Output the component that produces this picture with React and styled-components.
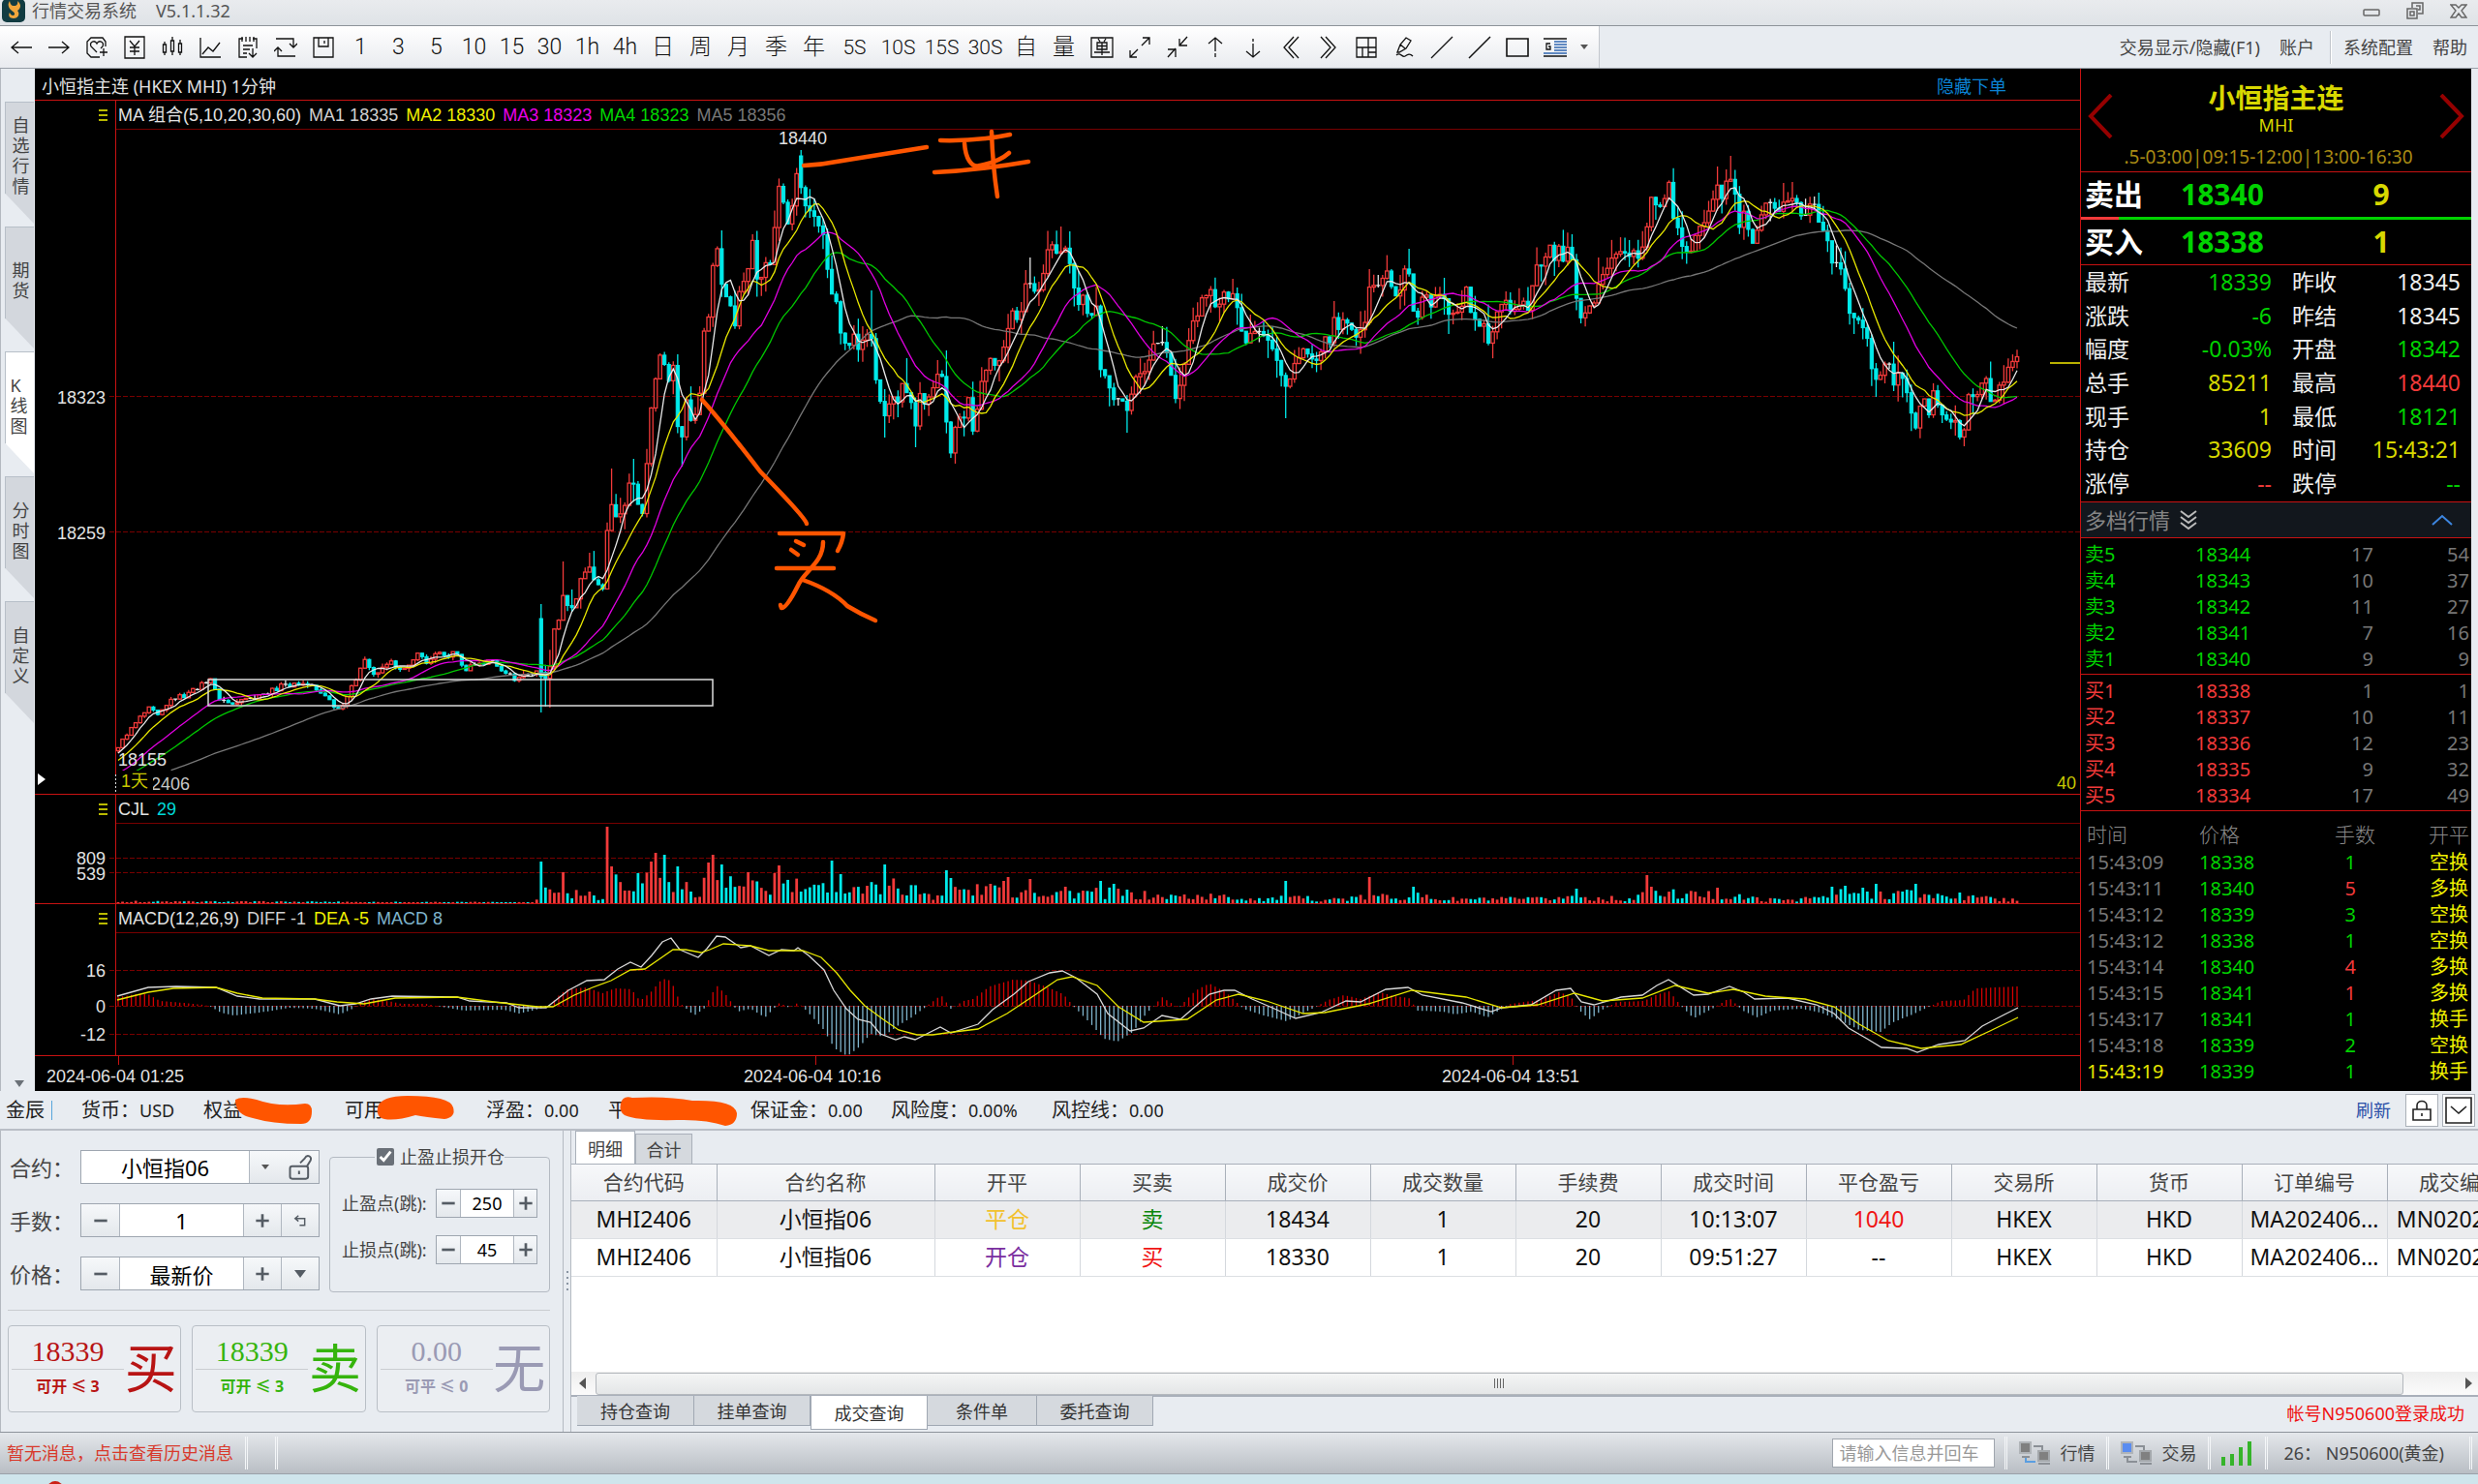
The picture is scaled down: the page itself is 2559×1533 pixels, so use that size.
import React from 'react';
import styled, { createGlobalStyle } from 'styled-components';

const GlobalStyle = createGlobalStyle`
  * {
    box-sizing: border-box;
  }

  body {
    margin: 0;
    background: #cfe5ec;
    font-family: "Noto Sans", "Noto Sans CJK SC", sans-serif;
    font-size: 18px;
    line-height: 24px;
    color: #333;
  }

  button, input, select {
    font-family: inherit;
    margin: 0;
    padding: 0;
  }

  a {
    color: inherit;
    text-decoration: none;
  }
`;

const RED = '#c81212';
const DIM_RED = '#780000';
const GREEN = '#00d200';
const YELLOW = '#d8d800';
const UP = '#f23a3a';
const ORANGE = '#ff5500';

/* ---------- window frame ---------- */

const Window = styled.div`
  display: flex;
  flex-direction: column;
  min-height: 100vh;
  overflow: hidden;
  background: #e8ecf1;
`;

const TitleBar = styled.header`
  display: flex;
  align-items: center;
  height: 27px;
  padding: 0 11px 4px 2px;
  background: linear-gradient(#e9ebee, #dfe3e7);
  border-bottom: 1px solid #8d9399;
  line-height: 22px;
  color: #555;
`;

const AppName = styled.span`
  margin: 0 20px 0 7px;
`;

const WindowButtons = styled.div`
  display: flex;
  gap: 26px;
  margin-left: auto;
`;

const PlainButton = styled.button`
  display: flex;
  align-items: center;
  justify-content: center;
  border: none;
  background: none;
  color: inherit;
`;

const ToolRow = styled.div`
  display: flex;
  height: 44px;
  border-bottom: 1px solid #9aa0a8;
`;

const Toolbar = styled.div`
  display: flex;
  align-items: center;
  padding: 0 4px 0 2px;
  background: linear-gradient(#fff, #e9ebef);
  border-right: 1px solid #c3c7cd;
`;

const ToolButton = styled(PlainButton)`
  width: ${({ $wide }) => ($wide ? 45 : 39)}px;
  height: 40px;
  font-family: Roboto, "Noto Sans CJK SC", sans-serif;
  font-weight: 300;
  font-size: ${({ $wide }) => ($wide ? 21 : 23)}px;
  line-height: 40px;
  color: #111;
`;

const Menu = styled.nav`
  display: flex;
  align-items: center;
  gap: 20px;
  margin-left: auto;
  padding: 0 11px 0 0;
  color: #444;
`;

const MenuDivider = styled.span`
  width: 2px;
  height: 34px;
  margin: 0 -8px 0 -4px;
  background: #fff;
  border-left: 1px solid #c0c4ca;
`;

const Main = styled.main`
  display: grid;
  grid-template-columns: 36px 1fr 404px;
  padding-right: 7px;
`;

/* ---------- side tabs ---------- */

const SideTabs = styled.nav`
  display: flex;
  flex-direction: column;
  gap: 3px;
  padding: 34px 1px 4px 4px;
  border-left: 1px solid #b4b9c0;
`;

const SideTab = styled.button`
  display: flex;
  align-items: center;
  justify-content: center;
  height: 126px;
  padding: 0 ${({ $active }) => ($active ? 10 : 6)}px 15px 8px;
  border: none;
  border-top: 1px solid #b7bfc8;
  border-left: 1px solid #b7bfc8;
  clip-path: polygon(0 0, 100% 0, 100% 100%, 0 75%);
  background: ${({ $active }) => ($active ? '#fff' : '#d3d7dd')};
  font-size: 18px;
  line-height: 21px;
  text-align: left;
  color: #444;
`;

const SideArrow = styled.span`
  margin: auto auto 0;
  border: 5px solid transparent;
  border-top: 7px solid #6b7178;
  border-bottom: none;
`;

/* ---------- chart ---------- */

const ChartArea = styled.section`
  background: #000;
  font-family: "Liberation Sans", "Noto Sans CJK SC", sans-serif;
  color: #e2e2e2;

  svg {
    display: block;
    width: 100%;
    height: auto;
    overflow: visible;
    position: relative;
  }
`;

const ChartTitle = styled.div`
  display: flex;
  justify-content: space-between;
  height: 32px;
  padding: 6px 76px 0 7px;
  font-family: "Noto Sans", "Noto Sans CJK SC", sans-serif;
`;

const HideLink = styled.a`
  color: #0b82d4;
`;

const PaneHeader = styled.div`
  display: grid;
  grid-template-columns: 84px 1fr;
  height: 31px;
  border-top: 1px solid ${RED};
`;

const PaneGrip = styled.span`
  display: flex;
  align-items: center;
  justify-content: flex-end;
  padding-right: 8px;
  border-right: 1px solid ${RED};

  i {
    width: 9px;
    height: 12px;
    border-top: 2px solid #b9b900;
    border-bottom: 2px solid #b9b900;
    background: linear-gradient(#b9b900, #b9b900) 0 3px / 9px 2px no-repeat;
  }
`;

const PaneLegend = styled.div`
  display: flex;
  gap: 8px;
  align-items: center;
  padding-left: 2px;
  border-bottom: 1px solid ${DIM_RED};
`;

const Legend = styled.span`
  color: ${({ $color }) => $color};
`;

/* ---------- quote panel ---------- */

const QuotePanel = styled.aside`
  display: flex;
  flex-direction: column;
  background: #000;
  border-left: 1px solid ${RED};
  color: #eee;
`;

const QuoteHead = styled.div`
  display: grid;
  grid-template-columns: 40px 1fr 40px;
  height: 107px;
  padding-top: 14px;
  border-bottom: 1px solid ${RED};
  text-align: center;
  color: ${YELLOW};

  svg {
    display: block;
    margin: 12px auto 0;
  }
`;

const QuoteName = styled.h1`
  margin: 0;
  font-size: 28px;
  font-weight: 600;
  line-height: 32px;
`;

const QuoteCode = styled.div`
  line-height: 24px;
`;

const Session = styled.div`
  margin-top: 9px;
  padding-right: 16px;
  font-size: 19px;
  line-height: 24px;
  color: #a88a14;
`;

const BestRow = styled.div`
  display: grid;
  grid-template-columns: 99px 187px 40px 1fr;
  align-items: center;
  height: 46px;
  padding-left: 4px;
  font-size: 30px;
  font-weight: 700;
  line-height: 40px;
  color: #fff;
`;

const Balance = styled.div`
  height: 3px;
  background: linear-gradient(90deg, ${UP} 39px, ${GREEN} 39px);
`;

const Tint = styled.span`
  color: ${({ $color }) => $color};
  text-align: ${({ $align }) => $align || 'left'};
`;

const Stats = styled.dl`
  flex: 1;
  display: grid;
  grid-template-columns: 75px 118px 75px 1fr;
  grid-auto-rows: 1fr;
  align-items: center;
  margin: 0;
  padding: 0 11px 2px 4px;
  border-top: 1px solid ${RED};
  border-bottom: 1px solid ${RED};
  font-size: 23px;
  line-height: 28px;

  dt {
    white-space: nowrap;
  }

  dt:nth-of-type(even) {
    padding-left: 21px;
  }

  dd {
    margin: 0;
    text-align: right;
    white-space: nowrap;
  }
`;

const DepthHead = styled.div`
  display: flex;
  align-items: center;
  gap: 10px;
  height: 37px;
  padding: 0 19px 0 4px;
  background: #12171d;
  border-bottom: 1px solid ${RED};
  font-size: 22px;
  color: #858585;

  svg:last-child {
    margin-left: auto;
  }
`;

const DepthBlock = styled.div`
  padding: 3px 0 2px;
  border-bottom: 1px solid ${RED};
`;

const DepthTable = styled.table`
  width: 100%;
  table-layout: fixed;
  border-collapse: collapse;
  font-size: 20px;
  line-height: 27px;
  color: ${({ $color }) => $color};

  td {
    height: 27px;
    padding: 0 2px 0 4px;
  }

  td:nth-child(1) { width: 114px; }
  td:nth-child(2) { width: 100px; }
  td:nth-child(3) { width: 90px; }

  td:nth-child(n + 3) {
    color: #777;
    text-align: right;
  }
`;

const TapeTable = styled.table`
  width: 100%;
  margin: 9px 0 7px;
  table-layout: fixed;
  border-collapse: collapse;
  font-size: 20px;
  line-height: 27px;
  color: ${GREEN};

  th {
    height: 30px;
    padding: 0 2px 0 6px;
    font-size: 21px;
    font-weight: 300;
    text-align: left;
    color: #888;
  }

  td {
    height: 27px;
    padding: 0 3px 0 6px;
  }

  th:nth-child(1) { width: 116px; }
  th:nth-child(2) { width: 100px; }
  th:nth-child(3) { width: 90px; }

  th:nth-child(n + 3) {
    text-align: right;
  }

  td:nth-child(1) {
    color: #777;
  }

  tr:last-child td:nth-child(1) {
    color: #e8e800;
  }

  td:nth-child(3) {
    padding-right: 22px;
    text-align: right;
  }

  td:nth-child(4) {
    text-align: right;
    color: #f0f000;
  }
`;

/* ---------- account bar ---------- */

const AccountBar = styled.div`
  display: flex;
  align-items: center;
  gap: 30px;
  height: 41px;
  padding: 0 3px 0 6px;
  border-bottom: 2px solid #b9bec6;
  color: #222;
`;

const AccountItem = styled.span`
  display: flex;
  align-items: center;
  width: ${({ $width }) => ($width ? `${$width}px` : 'auto')};
  white-space: nowrap;

  svg {
    flex: none;
    margin-left: -9px;
  }
`;

const AccountLabel = styled.span`
  font-size: 20px;
`;

const AccountMark = styled.span`
  width: 2px;
  height: 20px;
  margin-left: 7px;
  background: #58a6dc;
`;

const AccountTools = styled.div`
  display: flex;
  align-items: center;
  gap: 4px;
  margin-left: auto;

  a {
    margin-right: 11px;
    color: #2b50a8;
  }
`;

const SquareButton = styled(PlainButton)`
  width: 34px;
  height: 34px;
  background: #fff;
  border: 1px solid #aab0b8;
`;

/* ---------- order form ---------- */

const Lower = styled.div`
  display: grid;
  grid-template-columns: 581px 9px minmax(0, 1fr);
  height: 311px;
`;

const OrderForm = styled.form`
  display: flex;
  flex-direction: column;
  padding: 20px 13px 0 7px;
  border-left: 1px solid #b4b9c0;
  color: #444;
`;

const FormTop = styled.div`
  display: grid;
  grid-template-columns: 322px 228px;
  gap: 10px;
`;

const FormRow = styled.div`
  display: flex;
  align-items: center;
  height: 35px;
  margin-bottom: 20px;
  font-size: 22px;

  label {
    width: 75px;
    padding-left: 2px;
    white-space: nowrap;
  }
`;

const Stepper = styled.div`
  display: flex;
  width: ${({ $small }) => ($small ? 105 : 247)}px;
  height: ${({ $small }) => ($small ? 30 : 35)}px;
  border: 1px solid #9ea6b0;
  background: #fff;

  input, select {
    flex: 1;
    min-width: 0;
    border: none;
    outline: none;
    appearance: none;
    background: #fff;
    text-align: center;
    text-align-last: center;
    font-size: ${({ $small }) => ($small ? 18 : 22)}px;
    color: #000;
  }
`;

const StepButton = styled(PlainButton)`
  width: ${({ $width }) => $width || 39}px;
  background: linear-gradient(#f6f8fa, #e4e8ec);
  color: #555c64;

  & + input, & + &, input + &, select + & {
    border-left: 1px solid #b0b7c0;
  }
`;

const StopBox = styled.fieldset`
  min-width: 0;
  height: 152px;
  margin: -5px 0 0;
  padding: 21px 12px 0;
  border: 1px solid #b4bac2;
  border-radius: 4px;

  legend {
    display: flex;
    align-items: center;
    gap: 6px;
    margin: 0 auto;
    padding: 0 0 0 2px;
  }

  input[type='checkbox'] {
    width: 18px;
    height: 18px;
    accent-color: #6a7078;
  }
`;

const StopRow = styled.div`
  display: flex;
  align-items: center;
  justify-content: space-between;
  margin-bottom: 18px;
  white-space: nowrap;
`;

const Rule = styled.hr`
  width: 100%;
  margin: 0;
  border: none;
  border-top: 1px solid #c9ccd0;
`;

const TradeButtons = styled.div`
  display: flex;
  gap: 11px;
  margin-top: 15px;
`;

const TradeButton = styled.button`
  flex: 1;
  display: grid;
  grid-template-columns: 116px 1fr;
  align-items: center;
  height: 90px;
  padding: 0 3px 2px;
  border: 1px solid #b9bfc6;
  border-radius: 4px;
  background: #ebeef2;
  color: ${({ $color }) => $color};
`;

const TradeSide = styled.span`
  font-size: 54px;
  font-weight: 400;
  line-height: 60px;
`;

const TradePrice = styled.span`
  display: block;
  font-family: "Liberation Serif", serif;
  font-size: 30px;
  line-height: 36px;
`;

const TradeLimit = styled.span`
  display: block;
  border-top: 1px solid #c9ccd0;
  font-size: 16px;
  font-weight: 700;
  line-height: 34px;
`;

const Splitter = styled.div`
  display: flex;
  align-items: center;
  justify-content: center;
  border-left: 1px solid #b4bac2;
  border-right: 1px solid #b4bac2;

  i {
    width: 2px;
    height: 22px;
    background: repeating-linear-gradient(#8a95a3 0 2px, transparent 2px 6px);
  }
`;

/* ---------- deals ---------- */

const Deals = styled.section`
  display: flex;
  flex-direction: column;
  overflow: hidden;
  background: #fff;
`;

const TopTabs = styled.div`
  display: flex;
  align-items: flex-end;
  height: 35px;
  padding-left: 4px;
  background: #e8ecf1;
  border-bottom: 1px solid #a9b0ba;
`;

const TopTab = styled.button`
  width: ${({ $active }) => ($active ? 62 : 59)}px;
  height: ${({ $active }) => ($active ? 34 : 31)}px;
  border: 1px solid #a9b0ba;
  border-bottom: none;
  background: ${({ $active }) => ($active ? '#fff' : '#d5d9de')};
  font-size: 18px;
  color: #444;
`;

const DealTable = styled.table`
  width: 2025px;
  table-layout: fixed;
  border-collapse: collapse;
  text-align: center;
  color: #111;

  th {
    width: 150px;
    height: 37px;
    padding: 0;
    border-right: 1px solid #a9b0ba;
    border-bottom: 1px solid #a9b0ba;
    background: linear-gradient(#f7f8fa, #eceef2);
    font-size: 21px;
    font-weight: 400;
    color: #444;
  }

  th:nth-child(2) {
    width: 225px;
  }

  td {
    height: 39px;
    padding: 0 0 2px;
    border-right: 1px solid #d4d8dd;
    border-bottom: 1px solid #dcdfe3;
    font-size: 23px;
    line-height: 30px;
    white-space: nowrap;
  }

  tbody tr:first-child {
    background: #ebecee;
  }
`;

const ScrollTrack = styled.div`
  display: flex;
  align-items: center;
  justify-content: space-between;
  height: 24px;
  margin-top: auto;
  padding: 0 6px 0 8px;
  background: linear-gradient(#eee, #fbfbfb);
`;

const ScrollThumb = styled.div`
  flex: 1;
  display: flex;
  align-items: center;
  justify-content: center;
  height: 23px;
  margin: 0 64px 0 10px;
  border: 1px solid #b4b8bd;
  border-radius: 3px;
  background: linear-gradient(#f4f5f5, #e4e6e7);

  i {
    width: 11px;
    height: 10px;
    background: repeating-linear-gradient(90deg, #666 0 1px, transparent 1px 3px);
  }
`;

const ScrollArrow = styled.button`
  width: 0;
  height: 0;
  border: 6px solid transparent;
  ${({ $left }) => ($left
    ? 'border-right: 7px solid #555; border-left: none;'
    : 'border-left: 7px solid #555; border-right: none;')}
  background: none;
`;

const BottomTabs = styled.div`
  display: flex;
  align-items: flex-start;
  height: 38px;
  padding: 0 14px 0 6px;
  background: #e8ecf1;
  border-top: 2px solid #a9b0ba;
`;

const BottomTab = styled.button`
  width: ${({ $width }) => $width}px;
  height: ${({ $active }) => ($active ? 35 : 31)}px;
  margin-top: -1px;
  border: 1px solid #a0a8b3;
  border-top: none;
  border-left-width: ${({ $active }) => ($active ? 1 : 0)}px;
  background: ${({ $active }) => ($active ? '#fff' : '#d5d9de')};
  font-size: 18px;
  color: #333;
`;

const LoginNotice = styled.span`
  margin: 5px 0 0 auto;
  color: #f01010;
`;

/* ---------- status bar ---------- */

const StatusBar = styled.footer`
  display: flex;
  align-items: center;
  height: 44px;
  padding: 0 5px 0 7px;
  border-top: 1px solid #8d939b;
  border-bottom: 1px solid #9aa1a9;
  background: linear-gradient(#e4e7eb, #b9bec4);
  color: #444;

  input {
    width: 168px;
    height: 30px;
    margin: 0 10px 0 auto;
    padding: 0 6px;
    border: 1px solid #a0a6ae;
    background: #fff;
    font-size: 18px;
  }

  input::placeholder {
    color: #999;
  }
`;

const StatusLink = styled.a`
  margin-right: 12px;
  color: #d8392b;
`;

const StatusDivider = styled.span`
  width: 3px;
  height: 34px;
  margin-right: ${({ $gap }) => $gap || 12}px;
  border-left: 1px solid #f4f6f8;
  border-right: 1px solid #f4f6f8;
`;

const StatusItem = styled.span`
  display: flex;
  align-items: center;
  gap: 9px;
  margin-right: ${({ $last }) => ($last ? 26 : 12)}px;
  white-space: pre;
`;

const Taskbar = styled.div`
  flex: 1;
  height: 10px;
  padding-left: 49px;
  overflow: hidden;
  background: #cfe5ec;

  i {
    display: block;
    width: 16px;
    height: 16px;
    margin-top: 7px;
    border-radius: 8px;
    background: #cc1f14;
  }
`;

/* ---------- chart data ---------- */

// closing trace of the session, as [x, y] on the price pane
const closes = [
  [121, 772], [127, 765], [134, 753], [154, 728], [163, 736], [181, 720], [192, 719], [208, 707], [217, 702],
  [228, 724], [241, 727], [268, 720], [292, 708], [321, 707], [337, 720], [349, 735], [357, 726], [364, 707],
  [377, 683], [386, 697], [402, 683], [415, 692], [433, 675], [442, 685], [449, 673], [460, 680], [471, 672],
  [480, 692], [493, 683], [511, 685], [531, 702], [554, 692], [558, 699], [567, 695], [573, 649], [583, 615],
  [591, 634], [600, 598], [609, 588], [623, 612], [629, 525], [638, 530], [643, 540], [648, 499], [656, 500],
  [662, 550], [670, 450], [679, 370], [686, 377], [690, 402], [694, 363], [700, 438], [704, 450], [709, 413],
  [713, 431], [718, 422], [724, 402], [726, 352], [732, 322], [736, 270], [740, 253], [746, 302], [752, 315],
  [759, 336], [762, 299], [770, 291], [778, 249], [784, 304], [791, 270], [797, 275], [801, 224], [805, 190],
  [810, 216], [815, 240], [820, 206], [824, 163], [829, 215], [838, 215], [847, 245], [853, 250], [857, 316],
  [862, 295], [867, 341], [871, 356], [876, 366], [881, 349], [887, 359], [893, 350], [899, 332], [902, 386],
  [907, 404], [912, 429], [919, 418], [926, 413], [934, 393], [941, 416], [946, 449], [950, 413], [958, 416],
  [967, 386], [974, 391], [978, 447], [982, 463], [989, 429], [996, 431], [1001, 402], [1005, 443], [1013, 395],
  [1025, 370], [1030, 379], [1039, 349], [1043, 325], [1056, 324], [1060, 286], [1072, 299], [1084, 254],
  [1091, 266], [1097, 254], [1103, 268], [1113, 315], [1118, 307], [1125, 325], [1132, 313], [1136, 386],
  [1142, 395], [1151, 409], [1158, 416], [1164, 429], [1172, 384], [1180, 390], [1190, 363], [1197, 354],
  [1204, 358], [1209, 386], [1215, 413], [1221, 386], [1228, 349], [1237, 320], [1247, 299], [1257, 316],
  [1266, 299], [1276, 313], [1280, 338], [1288, 356], [1295, 343], [1307, 352], [1314, 363], [1321, 377],
  [1326, 399], [1335, 386], [1346, 358], [1357, 372], [1367, 352], [1372, 358], [1376, 324], [1383, 336],
  [1393, 327], [1402, 359], [1410, 325], [1414, 302], [1423, 292], [1433, 283], [1444, 310], [1452, 267],
  [1456, 292], [1461, 338], [1469, 307], [1479, 313], [1490, 297], [1497, 328], [1508, 325], [1514, 300],
  [1521, 333], [1532, 338], [1536, 357], [1544, 333], [1551, 307], [1558, 320], [1570, 308], [1579, 315],
  [1587, 280], [1591, 283], [1601, 253], [1606, 268], [1611, 248], [1615, 273], [1620, 257], [1625, 267],
  [1629, 318], [1637, 327], [1646, 310], [1654, 280], [1670, 265], [1682, 268], [1693, 260], [1699, 252],
  [1703, 202], [1711, 215], [1718, 218], [1722, 178], [1726, 210], [1735, 250], [1745, 263], [1755, 230],
  [1766, 220], [1772, 187], [1777, 203], [1782, 185], [1788, 178], [1792, 197], [1796, 235], [1802, 213],
  [1809, 250], [1819, 217], [1823, 208], [1835, 220], [1845, 207], [1852, 202], [1862, 228], [1867, 215],
  [1874, 217], [1880, 232], [1888, 257], [1895, 272], [1902, 283], [1908, 317], [1914, 333], [1922, 323],
  [1931, 370], [1936, 388], [1943, 390], [1950, 368], [1955, 392], [1962, 390], [1972, 410], [1977, 443],
  [1986, 410], [1991, 427], [1996, 407], [2005, 433], [2015, 440], [2018, 430], [2023, 445], [2029, 448],
  [2033, 407], [2044, 403], [2051, 397], [2058, 415], [2065, 395], [2070, 397], [2075, 375], [2083, 375],
];

// single bars that stand out: [x, fields]
const extremes = [
  [558, { open: 639, close: 699, high: 624, low: 736 }],
  [563, { low: 730 }],
  [568, { low: 731 }],
  [583, { high: 580 }],
  [607, { high: 571 }],
  [633, { high: 484 }],
  [653, { high: 474 }],
  [704, { low: 482 }],
  [745, { high: 238 }],
  [778, { high: 242 }],
  [829, { open: 161, high: 155 }],
  [899, { high: 300 }],
  [912, { low: 452 }],
  [935, { high: 370 }],
  [946, { low: 462 }],
  [978, { high: 362 }],
  [982, { low: 473 }],
  [1066, { high: 266 }],
  [1097, { high: 234 }],
  [1164, { low: 447 }],
  [1201, { high: 337 }],
  [1326, { low: 432 }],
  [1376, { high: 311 }],
  [1414, { high: 278 }],
  [1456, { high: 257 }],
  [1498, { low: 345 }],
  [1624, { high: 242 }],
  [1652, { high: 266 }],
  [1684, { high: 248 }],
  [1772, { high: 172 }],
  [1788, { high: 161 }],
  [1852, { high: 188 }],
  [1874, { high: 203 }],
  [1938, { low: 410 }],
  [1954, { high: 353 }],
  [2029, { low: 461 }],
];

const volumeEnvelope = [
  [121, 2], [550, 1], [556, 4], [558, 20], [620, 10], [628, 12], [634, 32], [660, 30], [690, 34], [715, 14],
  [735, 34], [760, 20], [800, 18], [812, 24], [840, 15], [870, 26], [895, 16], [912, 24], [940, 18],
  [965, 10], [985, 16], [1040, 16], [1100, 14], [1160, 12], [1200, 8], [1240, 9], [1290, 6], [1340, 6],
  [1380, 5], [1455, 10], [1490, 5], [1590, 5], [1620, 8], [1680, 5], [1710, 12], [1770, 10], [1830, 4],
  [1880, 7], [1900, 13], [1960, 13], [2000, 9], [2040, 7], [2083, 4],
];

const volumeSpikes = [
  [558, 43], [582, 32], [629, 79], [633, 38], [671, 43], [679, 52], [684, 50], [698, 38], [730, 42], [735, 50],
  [744, 40], [773, 32], [801, 31], [805, 39], [857, 44], [870, 30], [912, 40], [977, 34], [982, 26],
  [1022, 20], [1038, 23], [1042, 27], [1065, 25], [1098, 17], [1135, 23], [1149, 20], [1162, 14], [1326, 23],
  [1414, 27], [1461, 17], [1628, 15], [1702, 29], [1707, 17], [1772, 16], [1893, 17], [1907, 18], [1936, 20],
  [1977, 20], [2023, 11],
];

const diff = [
  [121, 1029], [153, 1020], [182, 1019], [223, 1020], [245, 1029], [268, 1032], [325, 1032], [351, 1039],
  [367, 1037], [383, 1032], [405, 1029], [472, 1030], [485, 1034], [523, 1036], [536, 1041], [564, 1041],
  [587, 1023], [606, 1013], [624, 1012], [638, 1001], [651, 994], [662, 999], [673, 987], [684, 973],
  [693, 969], [702, 981], [721, 989], [730, 980], [740, 967], [749, 968], [765, 979], [775, 977], [794, 987],
  [807, 981], [820, 982], [824, 979], [835, 987], [851, 1002], [861, 1023], [874, 1042], [886, 1053],
  [899, 1056], [909, 1068], [925, 1074], [934, 1071], [945, 1074], [957, 1068], [971, 1061], [982, 1067],
  [1010, 1058], [1025, 1043], [1047, 1027], [1062, 1014], [1084, 1005], [1097, 1003], [1111, 1010],
  [1133, 1027], [1144, 1047], [1167, 1065], [1181, 1062], [1200, 1049], [1219, 1053], [1234, 1040],
  [1249, 1027], [1264, 1023], [1275, 1023], [1293, 1032], [1316, 1042], [1338, 1052], [1364, 1046],
  [1390, 1034], [1405, 1035], [1431, 1022], [1454, 1020], [1469, 1028], [1510, 1036], [1540, 1045],
  [1551, 1041], [1581, 1038], [1607, 1023], [1622, 1021], [1633, 1035], [1646, 1038], [1674, 1030],
  [1696, 1028], [1711, 1018], [1723, 1012], [1749, 1028], [1764, 1027], [1786, 1019], [1801, 1025],
  [1812, 1032], [1846, 1031], [1876, 1038], [1894, 1047], [1909, 1062], [1928, 1073], [1943, 1082],
  [1969, 1083], [1980, 1087], [2002, 1079], [2029, 1075], [2047, 1060], [2070, 1048], [2084, 1041],
];

const dea = [
  [121, 1033], [153, 1025], [179, 1021], [223, 1020], [245, 1026], [271, 1031], [325, 1032], [348, 1035],
  [376, 1037], [408, 1031], [472, 1030], [510, 1035], [555, 1040], [571, 1040], [593, 1028], [612, 1020],
  [631, 1013], [651, 1002], [666, 1001], [682, 990], [695, 981], [708, 981], [724, 984], [733, 981],
  [747, 975], [775, 977], [794, 982], [829, 982], [848, 989], [864, 1005], [878, 1023], [893, 1039],
  [912, 1053], [928, 1064], [947, 1069], [963, 1069], [985, 1066], [1010, 1063], [1040, 1047], [1070, 1027],
  [1092, 1012], [1107, 1009], [1133, 1018], [1155, 1040], [1181, 1056], [1226, 1053], [1256, 1033],
  [1279, 1027], [1308, 1034], [1346, 1047], [1368, 1046], [1413, 1037], [1458, 1023], [1514, 1030],
  [1551, 1041], [1588, 1038], [1626, 1026], [1655, 1034], [1696, 1031], [1730, 1018], [1764, 1026],
  [1790, 1022], [1823, 1029], [1864, 1032], [1894, 1040], [1920, 1058], [1950, 1075], [1984, 1083],
  [2025, 1079], [2055, 1065], [2084, 1051],
];

// macd bars, signed height around the zero line
const macd = [
  [121, 9], [140, 12], [153, 12], [165, 5], [190, 3], [210, 1], [218, -1], [228, -7], [242, -10], [268, -7],
  [300, -2], [325, -3], [351, -9], [364, -3], [372, 3], [385, 7], [405, 4], [415, 2], [440, 2], [455, -1],
  [480, -5], [520, -4], [536, -8], [558, -3], [568, -1], [574, 8], [585, 17], [606, 19], [622, 13], [635, 18],
  [652, 17], [661, 5], [672, 14], [684, 28], [693, 26], [703, 2], [717, -10], [727, -3], [740, 21], [750, 11],
  [762, -6], [775, -3], [790, -12], [805, 3], [815, -2], [824, 3], [833, -5], [850, -24], [862, -44],
  [875, -52], [888, -42], [899, -29], [912, -32], [928, -20], [940, -13], [955, -2], [972, 11], [982, -3],
  [995, 5], [1005, 7], [1022, 20], [1046, 27], [1062, 26], [1080, 20], [1098, 12], [1110, -2], [1125, -17],
  [1140, -34], [1154, -37], [1170, -27], [1183, -9], [1200, 9], [1217, -2], [1235, 16], [1249, 23],
  [1266, 14], [1284, -3], [1305, -10], [1329, -16], [1355, -3], [1372, 6], [1388, 11], [1405, 7], [1425, 14],
  [1440, 10], [1455, 8], [1464, -5], [1490, -6], [1503, -9], [1520, -6], [1536, -12], [1560, 2], [1590, 6],
  [1610, 14], [1622, 10], [1630, -4], [1642, -14], [1655, -4], [1670, 4], [1698, 5], [1712, 12], [1724, 15],
  [1735, 1], [1749, -13], [1770, -2], [1786, 8], [1800, -5], [1815, -12], [1830, -5], [1860, -3], [1880, -7],
  [1900, -15], [1920, -25], [1942, -27], [1955, -17], [1975, -9], [1990, -2], [2005, 5], [2028, 6],
  [2040, 18], [2060, 19], [2084, 20],
];

const BARS = 432;
const FIRST_X = 122;
const STEP = (2083 - FIRST_X) / (BARS - 1);
const ZERO_Y = 1039;

const noise = (n) => {
  const v = Math.sin(n * 127.1 + 311.7) * 43758.5453;
  return v - Math.floor(v);
};

const sample = (points, x) => {
  if (x <= points[0][0]) return points[0][1];
  for (let i = 1; i < points.length; i += 1) {
    if (x <= points[i][0]) {
      const [x0, y0] = points[i - 1];
      const [x1, y1] = points[i];
      return y0 + ((y1 - y0) * (x - x0)) / (x1 - x0);
    }
  }
  return points[points.length - 1][1];
};

const indexAt = (x) => Math.round((x - FIRST_X) / STEP);

const bars = [];
for (let i = 0; i < BARS; i += 1) {
  const x = FIRST_X + i * STEP;
  const quiet = x < 556;
  const close = sample(closes, x) + (noise(i) - 0.5) * (quiet ? 5 : 13);
  const open = i ? bars[i - 1].close : close + 3;
  const wick = quiet ? 4 : 20;
  bars.push({
    x,
    open,
    close,
    high: Math.min(open, close) - noise(i + 900) ** 2 * wick,
    low: Math.max(open, close) + noise(i + 1800) ** 2 * wick,
  });
}
extremes.forEach(([x, fields]) => Object.assign(bars[indexAt(x)], fields));

const volumes = bars.map((bar, i) => Math.max(1, sample(volumeEnvelope, bar.x) * (0.3 + noise(i + 50))));
volumeSpikes.forEach(([x, height]) => { volumes[indexAt(x)] = height; });

const average = (span) => {
  const points = [];
  bars.forEach((bar, i) => {
    let sum = 0;
    for (let k = 0; k < span; k += 1) {
      sum += i - k >= 0 ? bars[i - k].close : 772 + Math.min((k - i) * 3, 45);
    }
    const y = sum / span;
    if (y < 797) points.push(`${bar.x.toFixed(1)},${y.toFixed(1)}`);
  });
  return points.join(' ');
};

const averages = [
  [60, '#777'],
  [30, '#00c800'],
  [20, '#e000e0'],
  [10, '#e8e800'],
  [5, '#e8e8e8'],
];

const toPoints = (list) => list.map((p) => p.join(',')).join(' ');

/* ---------- page data ---------- */

const sideTabs = ['自选行情', '期货', 'K线图', '分时图', '自定义'];

const stats = [
  ['最新', '18339', GREEN, '昨收', '18345', '#eee'],
  ['涨跌', '-6', GREEN, '昨结', '18345', '#eee'],
  ['幅度', '-0.03%', GREEN, '开盘', '18342', GREEN],
  ['总手', '85211', YELLOW, '最高', '18440', UP],
  ['现手', '1', YELLOW, '最低', '18121', GREEN],
  ['持仓', '33609', YELLOW, '时间', '15:43:21', YELLOW],
  ['涨停', '--', UP, '跌停', '--', GREEN],
];

const asks = [
  ['卖5', 18344, 17, 54],
  ['卖4', 18343, 10, 37],
  ['卖3', 18342, 11, 27],
  ['卖2', 18341, 7, 16],
  ['卖1', 18340, 9, 9],
];

const bids = [
  ['买1', 18338, 1, 1],
  ['买2', 18337, 10, 11],
  ['买3', 18336, 12, 23],
  ['买4', 18335, 9, 32],
  ['买5', 18334, 17, 49],
];

const tape = [
  ['15:43:09', 18338, 1, '空换'],
  ['15:43:11', 18340, 5, '多换', true],
  ['15:43:12', 18339, 3, '空换'],
  ['15:43:12', 18338, 1, '空换'],
  ['15:43:14', 18340, 4, '多换', true],
  ['15:43:15', 18341, 1, '多换', true],
  ['15:43:17', 18341, 1, '换手'],
  ['15:43:18', 18339, 2, '空换'],
  ['15:43:19', 18339, 1, '换手'],
];

const dealHead = ['合约代码', '合约名称', '开平', '买卖', '成交价', '成交数量', '手续费', '成交时间', '平仓盈亏', '交易所', '货币', '订单编号', '成交编号'];

const deals = [
  ['MHI2406', '小恒指06', ['平仓', '#f2c12e'], ['卖', '#0a860a'], '18434', '1', '20', '10:13:07', ['1040', '#f01414'], 'HKEX', 'HKD', 'MA202406...', 'MN0202406'],
  ['MHI2406', '小恒指06', ['开仓', '#7a2ea0'], ['买', '#f01414'], '18330', '1', '20', '09:51:27', '--', 'HKEX', 'HKD', 'MA202406...', 'MN0202406'],
];

const bottomTabs = [['持仓查询', 121], ['挂单查询', 120], ['成交查询', 121], ['条件单', 113], ['委托查询', 120]];

/* ---------- icons ---------- */

const Icon = ({ children, size = 24 }) => (
  <svg width={size} height={size} viewBox="0 0 24 24" fill="none" stroke="currentColor" strokeWidth="1.3">
    {children}
  </svg>
);

const leadingIcons = {
  后退: <path d="M23 12H2M9 6l-7 6 7 6" />,
  前进: <path d="M1 12h21M15 6l7 6-7 6" />,
  加自选: <path d="M21 11V6l-3-4H6L2 6v12l4 4h9M12 17L6 11c-2-5 4-7 6-3 2-4 8-2 6 3l-2 2M19 13v8M15 17h8" />,
  报价: <path d="M2 1h20v22H2zM7 5l5 6 5-6M12 11v9M7 12h10M7 16h10" />,
  蜡烛图: <path d="M2.500 9h3v8h-3zM4 6v3M4 17v3M10.500 5h3v11h-3zM12 1v4M12 16v4M18.500 8h3v9h-3zM20 4v4M20 17v3" />,
  走势图: <path d="M2 2v20h21M4 19l6-7 5 4 7-9" />,
  明细表: <path d="M7 3H3v19h8M17 3h4v10M6 1v5M10 1v5M14 1v5M18 1v5M7 10h10M7 14h7M7 18h4M17 13v9M13 18l4 4 4-4" />,
  刷新图: <path d="M2 3h18v8M16 8l4 4 4-4M22 21H4v-8M0 16l4-4 4 4" />,
  保存: <path d="M2 2h20v20H2zM7 2v9h10V2M13 5v3" />,
};

const trailingIcons = {
  放大: <path d="M14 10l8-8M15 2h7v7M10 14l-8 8M2 15v7h7" />,
  缩小: <path d="M22 1l-8 9M14 3v7h8M2 22l8-9M2 14h8v8" />,
  向上: <path d="M12 2v14M12 18v4M5 8l7-6 7 6" />,
  向下: <path d="M12 22V8M12 6V3M5 16l7 6 7-6" />,
  左移: <path d="M15 1L5 12l10 11M20 1L10 12l10 11" />,
  右移: <path d="M4 1l10 11L4 23M9 1l10 11L9 23" />,
  布局: <path d="M2 2h20v20H2zM14 2v20M2 12h20M8 12v10M14 17h8" />,
  画笔: <path d="M5 17l3-8 6-7 5 3-5 8-7 4zM8 9l5 4M4 20c4-4 6 3 9 1s5-3 8 0" />,
  直线: <path d="M1 23L23 1" />,
  线段: <path d="M2 22L22 2M1 23l3-3M20 4l3-3" strokeWidth="1.5" />,
  矩形: <path d="M1 3h22v18H1z" strokeWidth="1.600" />,
};

const OpenLock = () => (
  <Icon size={28}>
    <rect x="3" y="11" width="16" height="11" rx="2" strokeWidth="1.700" />
    <path d="M12 8l4-4c2-4 7-2 5 2l-3 5M11 15v3" strokeWidth="1.700" />
  </Icon>
);

const Network = ({ active }) => (
  <svg width="33" height="26" viewBox="0 0 33 26" fill="none" stroke="#8b9096" strokeWidth="2">
    <rect x="1" y="2" width="11" height="11" fill={active ? '#5a8cf0' : '#808080'} stroke="#b0b4b8" />
    <path d="M3 17h8M15 6h9v4M20 24h12" />
    <path d="M7 18v4h10" stroke={active ? '#8b9096' : '#5a9ee0'} />
    <rect x="20" y="11" width="11" height="10" fill="#808080" stroke="#a4a8ac" />
  </svg>
);

const Smear = ({ width, d }) => (
  <svg width={width} height="34" viewBox={`0 0 ${width} 34`}>
    <path d={d} fill={ORANGE} />
  </svg>
);

/* ---------- sections ---------- */

const GridLine = ({ y }) => (
  <line x1="113" x2="2148" y1={y} y2={y} stroke={DIM_RED} strokeWidth="1" strokeDasharray="5 2" />
);

const AxisLabel = ({ y, children }) => (
  <text x="109" y={y} textAnchor="end" fill="#e2e2e2" fontSize="18">{children}</text>
);

const PricePane = () => (
  <svg viewBox="36 134 2112 686">
    <line x1="119.500" x2="119.500" y1="134" y2="800" stroke={RED} />
    <line x1="119.500" x2="119.500" y1="800" y2="820" stroke="#ddd" strokeDasharray="2 2" />
    <GridLine y={409.5} />
    <GridLine y={549.5} />
    <AxisLabel y={417}>18323</AxisLabel>
    <AxisLabel y={557}>18259</AxisLabel>
    {bars.map(({ x, open, close, high, low }) => {
      const top = Math.min(open, close);
      const height = Math.abs(open - close);
      if (height < 1) {
        return <path key={x} d={`M${x} ${high}V${low}M${x - 2} ${close}h4`} stroke="#e8e8e8" strokeWidth="1.300" />;
      }
      return close < open ? (
        <g key={x} stroke={UP} strokeWidth="1.300" fill="#000">
          <line x1={x} x2={x} y1={high} y2={low} />
          <rect x={x - 1.7} y={top} width="3.400" height={height} />
        </g>
      ) : (
        <g key={x} stroke="#00eaea" fill="#00eaea">
          <line x1={x} x2={x} y1={high} y2={low} strokeWidth="1.300" />
          <rect x={x - 1.6} y={top} width="3.200" height={height} />
        </g>
      );
    })}
    {averages.map(([span, color]) => (
      <polyline key={span} points={average(span)} fill="none" stroke={color} strokeWidth="1.300" />
    ))}
    <rect x="215" y="702" width="521" height="27" fill="none" stroke="#ddd" strokeWidth="1.500" />
    <line x1="2117" x2="2148" y1="375" y2="375" stroke="#b8b000" strokeWidth="2" />
    <g fontSize="18" fill="#e2e2e2">
      <text x="804" y="149">18440</text>
      <text x="122" y="791">18155</text>
      <text x="156" y="816" fill="#c8c8c8">2406</text>
      <rect x="122" y="796" width="36" height="22" fill="#000" />
      <text x="125" y="813" fill="#c8c800">1天</text>
      <text x="2124" y="815" fill="#c8c800">40</text>
    </g>
    <path d="M39 799l8 6-8 6z" fill="#fff" />
    <g fill="none" stroke={ORANGE} strokeWidth="4.500" strokeLinecap="round" strokeLinejoin="round">
      <path d="M830 171Q850 170 870 166L957 152" />
      <path d="M971 145Q1010 146 1043 139M965 178Q1010 176 1062 167M1024 136Q1025 170 1030 203" />
      <path d="M996 148C997 163 1003 174 1012 171Q1032 167 1042 158" />
      <path d="M725 413Q745 435 785 487Q832 535 833 541" />
      <path d="M805 551H871Q870 560 865 569M822 559l8 4M817 568l7 5M802 587H861" />
      <path d="M850 560C850 582 830 590 824 605Q812 629 807 628L806 625M829 599Q860 610 875 626Q888 634 904 641" />
    </g>
  </svg>
);

const VolumePane = () => (
  <svg viewBox="36 851 2112 82">
    <line x1="119.500" x2="119.500" y1="851" y2="933" stroke={RED} />
    <GridLine y={886.5} />
    <GridLine y={901.5} />
    <AxisLabel y={893}>809</AxisLabel>
    <AxisLabel y={909}>539</AxisLabel>
    {bars.map((bar, i) => (
      <rect
        key={bar.x}
        x={bar.x - 1.4}
        y={933 - volumes[i]}
        width="2.800"
        height={volumes[i]}
        fill={bar.close < bar.open ? UP : '#00eaea'}
      />
    ))}
  </svg>
);

const MacdPane = () => (
  <svg viewBox="36 964 2112 163">
    <line x1="119.500" x2="119.500" y1="964" y2="1091" stroke={RED} />
    <GridLine y={1002.5} />
    <GridLine y={ZERO_Y + 0.5} />
    <GridLine y={1068.5} />
    <AxisLabel y={1009}>16</AxisLabel>
    <AxisLabel y={1046}>0</AxisLabel>
    <AxisLabel y={1075}>-12</AxisLabel>
    {bars.map(({ x }) => {
      const value = sample(macd, x);
      return (
        <line
          key={x}
          x1={x}
          x2={x}
          y1={ZERO_Y}
          y2={ZERO_Y - value}
          stroke={value > 0 ? '#d80000' : '#7fb4cc'}
          strokeWidth="1.300"
        />
      );
    })}
    <polyline points={toPoints(diff)} fill="none" stroke="#d8d8d8" strokeWidth="1.300" />
    <polyline points={toPoints(dea)} fill="none" stroke="#e8e800" strokeWidth="1.300" />
    <path d="M36 1090.500H2148M122.500 1091v9M842.500 1091v9M1562.500 1091v9" stroke={RED} />
    <g fontSize="18" fill="#e2e2e2">
      <text x="48" y="1118">2024-06-04 01:25</text>
      <text x="768" y="1118">2024-06-04 10:16</text>
      <text x="1489" y="1118">2024-06-04 13:51</text>
    </g>
  </svg>
);

const Header = ({ items }) => (
  <PaneHeader>
    <PaneGrip><i /></PaneGrip>
    <PaneLegend>
      {items.map(([text, color]) => <Legend key={text} $color={color}>{text}</Legend>)}
    </PaneLegend>
  </PaneHeader>
);

const Chart = () => (
  <ChartArea>
    <ChartTitle>
      <span>小恒指主连 (HKEX MHI) 1分钟</span>
      <HideLink href="#order">隐藏下单</HideLink>
    </ChartTitle>
    <Header
      items={[
        ['MA 组合(5,10,20,30,60)', '#e2e2e2'],
        ['MA1 18335', '#d0d0d0'],
        ['MA2 18330', '#f0f000'],
        ['MA3 18323', '#e800e8'],
        ['MA4 18323', '#00d800'],
        ['MA5 18356', '#777'],
      ]}
    />
    <PricePane />
    <Header items={[['CJL', '#e2e2e2'], ['29', '#00d8d8']]} />
    <VolumePane />
    <Header
      items={[
        ['MACD(12,26,9)', '#e2e2e2'],
        ['DIFF -1', '#d0d0d0'],
        ['DEA -5', '#f0f000'],
        ['MACD 8', '#7fb4cc'],
      ]}
    />
    <MacdPane />
  </ChartArea>
);

const Depth = ({ rows, color }) => (
  <DepthBlock>
    <DepthTable $color={color}>
      <tbody>
        {rows.map((row) => (
          <tr key={row[0]}>
            {row.map((cell, i) => <td key={i}>{cell}</td>)}
          </tr>
        ))}
      </tbody>
    </DepthTable>
  </DepthBlock>
);

const Quote = () => (
  <QuotePanel>
    <QuoteHead>
      <svg width="26" height="46" viewBox="0 0 26 46" fill="none" stroke="#960000" strokeWidth="4">
        <path d="M24 1L3 23l21 22" />
      </svg>
      <div>
        <QuoteName>小恒指主连</QuoteName>
        <QuoteCode>MHI</QuoteCode>
        <Session>.5-03:00|09:15-12:00|13:00-16:30</Session>
      </div>
      <svg width="26" height="46" viewBox="0 0 26 46" fill="none" stroke="#960000" strokeWidth="4">
        <path d="M2 1l21 22L2 45" />
      </svg>
    </QuoteHead>
    <BestRow>
      <span>卖出</span>
      <Tint $color={GREEN}>18340</Tint>
      <Tint $color={YELLOW} $align="center">9</Tint>
    </BestRow>
    <Balance />
    <BestRow>
      <span>买入</span>
      <Tint $color={GREEN}>18338</Tint>
      <Tint $color={YELLOW} $align="center">1</Tint>
    </BestRow>
    <Stats>
      {stats.map(([label, value, color, label2, value2, color2]) => (
        <React.Fragment key={label}>
          <dt>{label}</dt>
          <dd><Tint $color={color}>{value}</Tint></dd>
          <dt>{label2}</dt>
          <dd><Tint $color={color2}>{value2}</Tint></dd>
        </React.Fragment>
      ))}
    </Stats>
    <DepthHead>
      多档行情
      <svg width="18" height="22" viewBox="0 0 18 22" fill="none" stroke="#bbb" strokeWidth="2">
        <path d="M1 2l8 6 8-6M1 8l8 6 8-6M1 14l8 6 8-6" />
      </svg>
      <svg width="22" height="14" viewBox="0 0 22 14" fill="none" stroke="#3d86e0" strokeWidth="2">
        <path d="M1 12L11 3l10 9" />
      </svg>
    </DepthHead>
    <Depth rows={asks} color={GREEN} />
    <Depth rows={bids} color={UP} />
    <TapeTable>
      <thead>
        <tr><th>时间</th><th>价格</th><th>手数</th><th>开平</th></tr>
      </thead>
      <tbody>
        {tape.map(([time, price, lots, kind, rising], i) => (
          <tr key={i}>
            <td>{time}</td>
            <td>{price}</td>
            <td><Tint $color={rising ? UP : GREEN}>{lots}</Tint></td>
            <td>{kind}</td>
          </tr>
        ))}
      </tbody>
    </TapeTable>
  </QuotePanel>
);

const SmallArrow = () => (
  <svg width="22" height="12" viewBox="0 0 22 12"><path d="M7 3h8l-4 5z" fill="#555" /></svg>
);

const Tools = () => (
  <ToolRow>
    <Toolbar>
      {Object.entries(leadingIcons).map(([name, path]) => (
        <ToolButton key={name} aria-label={name}><Icon>{path}</Icon></ToolButton>
      ))}
      {['1', '3', '5', '10', '15', '30', '1h', '4h', '日', '周', '月', '季', '年'].map((text) => (
        <ToolButton key={text}>{text}</ToolButton>
      ))}
      {['5S', '10S', '15S', '30S'].map((text) => <ToolButton key={text} $wide>{text}</ToolButton>)}
      <ToolButton>自</ToolButton>
      <ToolButton>量</ToolButton>
      <ToolButton aria-label="下单">
        <Icon><path d="M1 2h22v20H1zM8 3l2 3M16 3l-2 3M7 7h10v7H7zM7 10.500h10M12 7v13M4 17h16" /></Icon>
      </ToolButton>
      {Object.entries(trailingIcons).map(([name, path]) => (
        <ToolButton key={name} aria-label={name}><Icon>{path}</Icon></ToolButton>
      ))}
      <ToolButton aria-label="文字">
        <Icon>
          <path d="M0 3h24M0 21h24" strokeWidth="1.500" />
          <path d="M11 6h13M11 9h13M11 12h13M11 15h13M0 18h24" stroke="#2f66b0" strokeWidth="1.500" />
          <path d="M7 8H3v6h4v-3H5" />
        </Icon>
      </ToolButton>
      <SmallArrow />
    </Toolbar>
    <Menu>
      <a href="#trade">交易显示/隐藏(F1)</a>
      <a href="#account">账户</a>
      <MenuDivider />
      <a href="#settings">系统配置</a>
      <a href="#help">帮助</a>
    </Menu>
  </ToolRow>
);

const Account = () => (
  <AccountBar>
    <AccountItem $width={48}><AccountLabel>金辰</AccountLabel><AccountMark /></AccountItem>
    <AccountItem $width={96}><AccountLabel>货币：</AccountLabel>USD</AccountItem>
    <AccountItem $width={116}>
      <AccountLabel>权益</AccountLabel>
      <Smear width={84} d="M2 6Q8 2 24 6Q46 14 74 10Q81 10 81 18Q81 31 70 31Q40 31 20 25Q2 22 2 6z" />
    </AccountItem>
    <AccountItem $width={116}>
      <AccountLabel>可用</AccountLabel>
      <Smear width={84} d="M3 14Q6 2 34 2Q78 2 81 14Q84 24 72 26Q52 24 42 22Q22 28 10 26Q1 24 3 14z" />
    </AccountItem>
    <AccountItem $width={96}><AccountLabel>浮盈：</AccountLabel>0.00</AccountItem>
    <AccountItem $width={117}>
      <AccountLabel>平</AccountLabel>
      <Smear width={126} d="M2 10Q4 1 14 4Q50 2 76 7Q120 6 122 20Q122 32 110 33Q90 26 60 27Q20 28 6 22Q0 18 2 10z" />
    </AccountItem>
    <AccountItem $width={115}><AccountLabel>保证金：</AccountLabel>0.00</AccountItem>
    <AccountItem $width={136}><AccountLabel>风险度：</AccountLabel>0.00%</AccountItem>
    <AccountItem><AccountLabel>风控线：</AccountLabel>0.00</AccountItem>
    <AccountTools>
      <a href="#refresh">刷新</a>
      <SquareButton aria-label="锁定">
        <Icon><path d="M3 11h18v11H3zM7 11V7c0-6 10-6 10 0v4M12 15v3" strokeWidth="1.600" /></Icon>
      </SquareButton>
      <SquareButton aria-label="收起">
        <svg width="28" height="28" viewBox="0 0 28 28" fill="none" stroke="#222" strokeWidth="1.600">
          <path d="M1 1h26v26H1zM6 10l8 7 8-7" />
        </svg>
      </SquareButton>
    </AccountTools>
  </AccountBar>
);

const Minus = () => <Icon size={16}><path d="M2 12h20" strokeWidth="4" /></Icon>;
const Plus = () => <Icon size={16}><path d="M2 12h20M12 2v20" strokeWidth="4" /></Icon>;

const StopField = ({ id, label, value }) => (
  <StopRow>
    <label htmlFor={id}>{label}</label>
    <Stepper $small>
      <StepButton type="button" $width={24} aria-label="减"><Minus /></StepButton>
      <input id={id} defaultValue={value} />
      <StepButton type="button" $width={24} aria-label="加"><Plus /></StepButton>
    </Stepper>
  </StopRow>
);

const Trade = ({ color, price, limit, side }) => (
  <TradeButton type="button" $color={color}>
    <span>
      <TradePrice>{price}</TradePrice>
      <TradeLimit>{limit}</TradeLimit>
    </span>
    <TradeSide>{side}</TradeSide>
  </TradeButton>
);

const Order = () => (
  <OrderForm id="order">
    <FormTop>
      <div>
        <FormRow>
          <label htmlFor="contract">合约：</label>
          <Stepper>
            <select id="contract"><option>小恒指06</option></select>
            <StepButton type="button" $width={33} aria-label="选择合约"><SmallArrow /></StepButton>
            <StepButton type="button" aria-label="锁定合约"><OpenLock /></StepButton>
          </Stepper>
        </FormRow>
        <FormRow>
          <label htmlFor="lots">手数：</label>
          <Stepper>
            <StepButton type="button" aria-label="减"><Minus /></StepButton>
            <input id="lots" defaultValue="1" />
            <StepButton type="button" aria-label="加"><Plus /></StepButton>
            <StepButton type="button" aria-label="还原">
              <Icon size={14}><path d="M9 3L3 8l6 5M3 8h17v12h-9" strokeWidth="2.500" /></Icon>
            </StepButton>
          </Stepper>
        </FormRow>
        <FormRow>
          <label htmlFor="price">价格：</label>
          <Stepper>
            <StepButton type="button" aria-label="减"><Minus /></StepButton>
            <input id="price" defaultValue="最新价" />
            <StepButton type="button" aria-label="加"><Plus /></StepButton>
            <StepButton type="button" aria-label="选择价格">
              <svg width="12" height="8" viewBox="0 0 12 8"><path d="M0 0h12L6 8z" fill="#555c64" /></svg>
            </StepButton>
          </Stepper>
        </FormRow>
      </div>
      <StopBox>
        <legend>
          <input type="checkbox" id="stops" defaultChecked />
          <label htmlFor="stops">止盈止损开仓</label>
        </legend>
        <StopField id="take" label="止盈点(跳):" value="250" />
        <StopField id="stop" label="止损点(跳):" value="45" />
      </StopBox>
    </FormTop>
    <Rule />
    <TradeButtons>
      <Trade color="#b81414" price="18339" limit="可开 ≤ 3" side="买" />
      <Trade color="#35b40c" price="18339" limit="可开 ≤ 3" side="卖" />
      <Trade color="#9a9ab4" price="0.00" limit="可平 ≤ 0" side="无" />
    </TradeButtons>
  </OrderForm>
);

const DealList = () => (
  <Deals>
    <TopTabs>
      <TopTab $active>明细</TopTab>
      <TopTab>合计</TopTab>
    </TopTabs>
    <DealTable>
      <thead>
        <tr>{dealHead.map((name) => <th key={name}>{name}</th>)}</tr>
      </thead>
      <tbody>
        {deals.map((row, r) => (
          <tr key={r}>
            {row.map((cell, i) => (
              <td key={i}>
                {Array.isArray(cell) ? <Tint $color={cell[1]}>{cell[0]}</Tint> : cell}
              </td>
            ))}
          </tr>
        ))}
      </tbody>
    </DealTable>
    <ScrollTrack>
      <ScrollArrow $left aria-label="向左滚动" />
      <ScrollThumb><i /></ScrollThumb>
      <ScrollArrow aria-label="向右滚动" />
    </ScrollTrack>
    <BottomTabs>
      {bottomTabs.map(([name, width]) => (
        <BottomTab key={name} $width={width} $active={name === '成交查询'}>{name}</BottomTab>
      ))}
      <LoginNotice>帐号N950600登录成功</LoginNotice>
    </BottomTabs>
  </Deals>
);

const Status = () => (
  <StatusBar>
    <StatusLink href="#messages">暂无消息，点击查看历史消息</StatusLink>
    <StatusDivider $gap={28} />
    <StatusDivider />
    <input aria-label="信息" placeholder="请输入信息并回车" />
    <StatusDivider />
    <StatusItem><Network />行情</StatusItem>
    <StatusDivider />
    <StatusItem><Network active />交易</StatusItem>
    <StatusDivider $gap={10} />
    <StatusItem>
      <svg width="34" height="26" viewBox="0 0 34 26" stroke="#35b42a" strokeWidth="4">
        <path d="M3 26v-9M12 26V14M21 26V7M30 26V1" />
      </svg>
    </StatusItem>
    <StatusDivider $gap={16} />
    <StatusItem $last>26： N950600(黄金)</StatusItem>
    <StatusDivider $gap={1} />
  </StatusBar>
);

const App = () => (
  <>
    <GlobalStyle />
    <Window>
      <TitleBar>
        <svg width="24" height="24" viewBox="0 0 24 24">
          <rect width="24" height="24" rx="5" fill="#123c42" />
          <path d="M8 2c1 5 3 5 5 5s4-2 3-5c5 4 3 8 0 10 3 3 1 8-4 8-4 0-6-3-4-6 1 3 4 4 5 2 1-3-5-4-6-8-1-3 0-4 1-6z" fill="#f0a63c" />
        </svg>
        <AppName>行情交易系统</AppName>
        <span>V5.1.1.32</span>
        <WindowButtons>
          <PlainButton aria-label="最小化">
            <svg width="18" height="18" fill="none" stroke="#666" strokeWidth="1.500"><rect x="1" y="8" width="16" height="6" rx="1" /></svg>
          </PlainButton>
          <PlainButton aria-label="还原窗口">
            <svg width="20" height="18" fill="none" stroke="#666" strokeWidth="1.500">
              <path d="M7 6V1h11v11h-5M11 4h4v4h-2M2 7h10v10H2zM5 10h4v4H5z" />
            </svg>
          </PlainButton>
          <PlainButton aria-label="关闭">
            <svg width="18" height="18" fill="none" stroke="#666" strokeWidth="1.400">
              <path d="M1 3h5l3 3 3-3h5l-5 6 5 7h-5l-3-4-3 4H1l5-7z" />
            </svg>
          </PlainButton>
        </WindowButtons>
      </TitleBar>
      <Tools />
      <Main>
        <SideTabs>
          {sideTabs.map((name) => (
            <SideTab key={name} $active={name === 'K线图'}>
              <span>{[...name].map((char) => <React.Fragment key={char}>{char}<br /></React.Fragment>)}</span>
            </SideTab>
          ))}
          <SideArrow />
        </SideTabs>
        <Chart />
        <Quote />
      </Main>
      <Account />
      <Lower>
        <Order />
        <Splitter><i /></Splitter>
        <DealList />
      </Lower>
      <Status />
      <Taskbar><i /></Taskbar>
    </Window>
  </>
);

export default App;
